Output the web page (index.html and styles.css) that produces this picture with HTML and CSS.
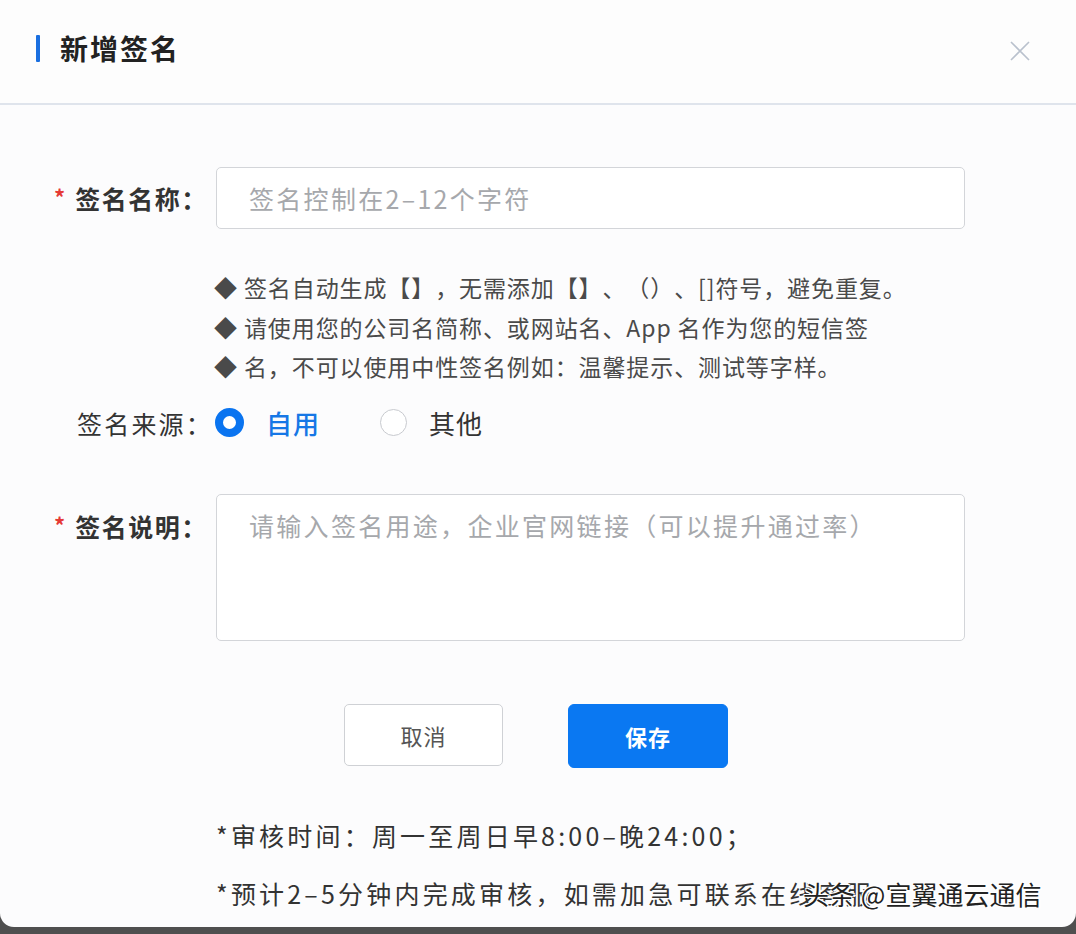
FILE: index.html
```html
<!DOCTYPE html>
<html lang="zh-CN">
<head>
<meta charset="UTF-8">
<title>新增签名</title>
<link rel="stylesheet" href="styles.css">
</head>
<body>
<div class="dialog">
<div class="header">
<span class="bar"></span>
<h1 class="title">新增签名</h1>
<button class="close" aria-label="关闭">
<svg width="20" height="20" viewBox="0 0 20 20"><path d="M1 1L19 19M19 1L1 19" stroke="#b9c1cd" stroke-width="1.6" fill="none"/></svg>
</button>
</div>
<div class="body">
<div class="row">
<label class="label bold"><span class="req">*</span>签名名称：</label>
<input type="text" class="input" placeholder="签名控制在2–12个字符">
</div>
<ul class="hints">
<li>◆ 签名自动生成【】，无需添加【】、（）、[]符号，避免重复。</li>
<li>◆ 请使用您的公司名简称、或网站名、App 名作为您的短信签</li>
<li>◆ 名，不可以使用中性签名例如：温馨提示、测试等字样。</li>
</ul>
<div class="row radio-row">
<label class="label">签名来源：</label>
<div class="radios">
<span class="radio checked"><i class="dot"></i>自用</span>
<span class="radio"><i class="dot"></i>其他</span>
</div>
</div>
<div class="row top">
<label class="label bold"><span class="req">*</span>签名说明：</label>
<textarea class="textarea" placeholder="请输入签名用途，企业官网链接（可以提升通过率）"></textarea>
</div>
<div class="actions">
<button class="btn">取消</button>
<button class="btn primary">保存</button>
</div>
<div class="notes">
<p>*审核时间：周一至周日早8:00–晚24:00；</p>
<p>*预计2–5分钟内完成审核，如需加急可联系在线客服</p>
</div>
<div class="watermark">头条 @宣翼通云通信</div>
</div>
</div>
</body>
</html>
```

FILE: styles.css
```css
body {
margin: 0;
background-color: #4f4f4f;
font-family: "Noto Sans CJK SC", "Noto Sans", sans-serif;
color: #333;
text-spacing-trim: space-all;
}
.dialog {
height: 927px;
background-color: #fcfcfd;
border-radius: 0 0 14px 14px;
overflow: hidden;
}
.header {
height: 96px;
padding: 0 36px 7px;
display: flex;
align-items: center;
border-bottom: 2px solid #dfe4ec;
background-color: #fdfdfd;
}
.bar {
width: 4px;
height: 27px;
background-color: #1a6fe0;
border-radius: 1px;
margin-right: 20px;
}
.title {
margin: 0;
font-size: 28px;
font-weight: 700;
color: #222;
letter-spacing: 2px;
flex: 1;
}
.close {
border: none;
background: none;
padding: 0;
margin-right: 10px;
margin-top: 8px;
cursor: pointer;
}
.body {
position: relative;
padding-top: 62px;
}
.row {
display: flex;
align-items: center;
}
.row.top {
align-items: flex-start;
margin-top: 51px;
}
.label {
width: 200px;
box-sizing: border-box;
padding-left: 54px;
font-size: 25px;
color: #333;
letter-spacing: 1.5px;
white-space: nowrap;
}
.label.bold {
font-weight: 700;
}
.row.top .label {
padding-top: 14px;
}
.req {
color: #e53935;
font-size: 22px;
margin-right: 10px;
letter-spacing: 0;
vertical-align: 3px;
}
.radio-row .label {
padding-left: 77px;
letter-spacing: 2.2px;
}
.input, .textarea {
margin-left: 16px;
width: 749px;
box-sizing: border-box;
border: 1.5px solid #d3d5d9;
border-radius: 5px;
background-color: #fff;
font-family: inherit;
font-size: 25px;
letter-spacing: 2.3px;
padding: 0 32px;
outline: none;
}
.input {
height: 62px;
}
.textarea {
height: 147px;
padding-top: 12px;
resize: none;
}
.input::placeholder, .textarea::placeholder {
color: #a6a8ac;
}
.hints {
list-style: none;
margin: 39px 0 0 214px;
padding: 0;
font-size: 23px;
line-height: 39.5px;
color: #4a4a4a;
letter-spacing: 0.9px;
}
.radio-row {
margin-top: 16px;
height: 40px;
}
.radios {
display: flex;
margin-left: 15px;
}
.radio {
display: flex;
align-items: center;
font-size: 26px;
color: #333;
letter-spacing: 1px;
margin-right: 60px;
}
.radio .dot {
width: 27px;
height: 27px;
border-radius: 50%;
border: 1px solid #c8cacf;
background-color: #fff;
box-sizing: border-box;
margin-right: 22px;
}
.radio.checked {
color: #1677e6;
font-weight: 500;
}
.radio.checked .dot {
border: 8px solid #0a74f0;
width: 29px;
height: 29px;
}
.actions {
display: flex;
justify-content: center;
gap: 65px;
margin-top: 63px;
padding-right: 4px;
}
.btn {
width: 159px;
height: 62px;
font-family: inherit;
font-size: 22px;
letter-spacing: 1px;
color: #555;
background-color: #fff;
border: 1.5px solid #cfd1d5;
border-radius: 5px;
cursor: pointer;
}
.btn.primary {
width: 160px;
height: 64px;
background-color: #0a78f2;
border-color: #0a78f2;
color: #fff;
font-weight: 700;
border-radius: 6px;
}
.notes {
margin: 38px 0 0 216px;
font-size: 25px;
color: #333;
letter-spacing: 3.2px;
}
.notes p {
margin: 0;
line-height: 58px;
}
.watermark {
position: absolute;
left: 803px;
top: 770px;
font-size: 26px;
color: #222;
text-shadow: 2px 1px 0 #fff, -1px -1px 0 #fff, 1px -1px 0 #fff, -1px 1px 0 #fff;
white-space: nowrap;
}
```
